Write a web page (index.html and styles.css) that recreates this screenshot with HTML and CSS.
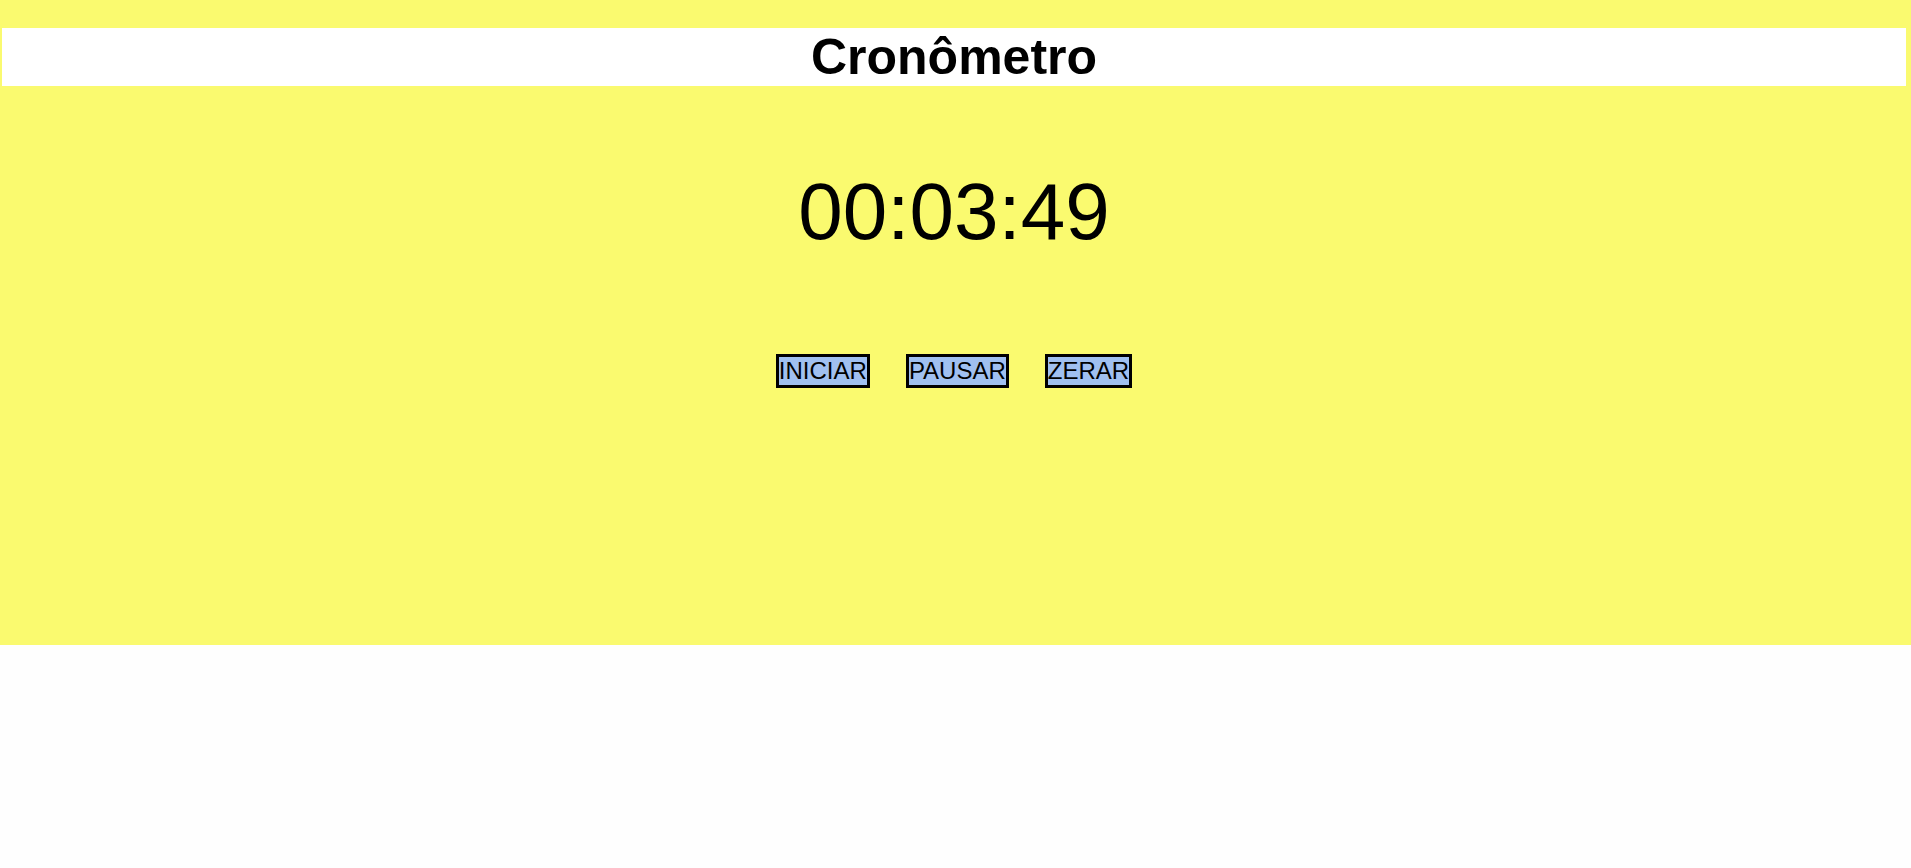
FILE: index.html
```html
<!DOCTYPE html>
<html lang="pt-BR">
<head>
<meta charset="utf-8">
<title>Cronômetro</title>
<link rel="stylesheet" href="styles.css">
</head>
<body>
<main class="app">
  <header class="title-bar">
    <h1 class="title">Cronômetro</h1>
  </header>
  <div class="display">00:03:49</div>
  <div class="controls">
    <button class="btn" type="button">INICIAR</button>
    <button class="btn" type="button">PAUSAR</button>
    <button class="btn" type="button">ZERAR</button>
  </div>
</main>
</body>
</html>
```
FILE: styles.css
```css
html, body {
  margin: 0;
  padding: 0;
  background: #fefefe;
  font-family: "Liberation Sans", Arial, sans-serif;
  color: #000;
}

.app {
  height: 645px;
  background: #fafa6f;
  padding-top: 28px;
  box-sizing: border-box;
  display: flex;
  flex-direction: column;
  align-items: stretch;
}

.title-bar {
  background: #ffffff;
  margin: 0 5px 0 2px;
  height: 58px;
  display: flex;
  align-items: center;
  justify-content: center;
}

.title {
  margin: 0;
  font-size: 50px;
  font-weight: bold;
  line-height: 58px;
}

.display {
  margin: 86px 5px 0 2px;
  text-align: center;
  font-size: 80px;
  line-height: 80px;
  height: 80px;
}

.controls {
  margin: 102px 5px 0 2px;
  display: flex;
  justify-content: center;
  gap: 36px;
}

.btn {
  font-family: "Liberation Sans", Arial, sans-serif;
  font-size: 24px;
  line-height: 28px;
  padding: 0;
  margin: 0;
  border: 3px solid #000;
  border-radius: 0;
  background: #a0c0f0;
  color: #000;
}
```
